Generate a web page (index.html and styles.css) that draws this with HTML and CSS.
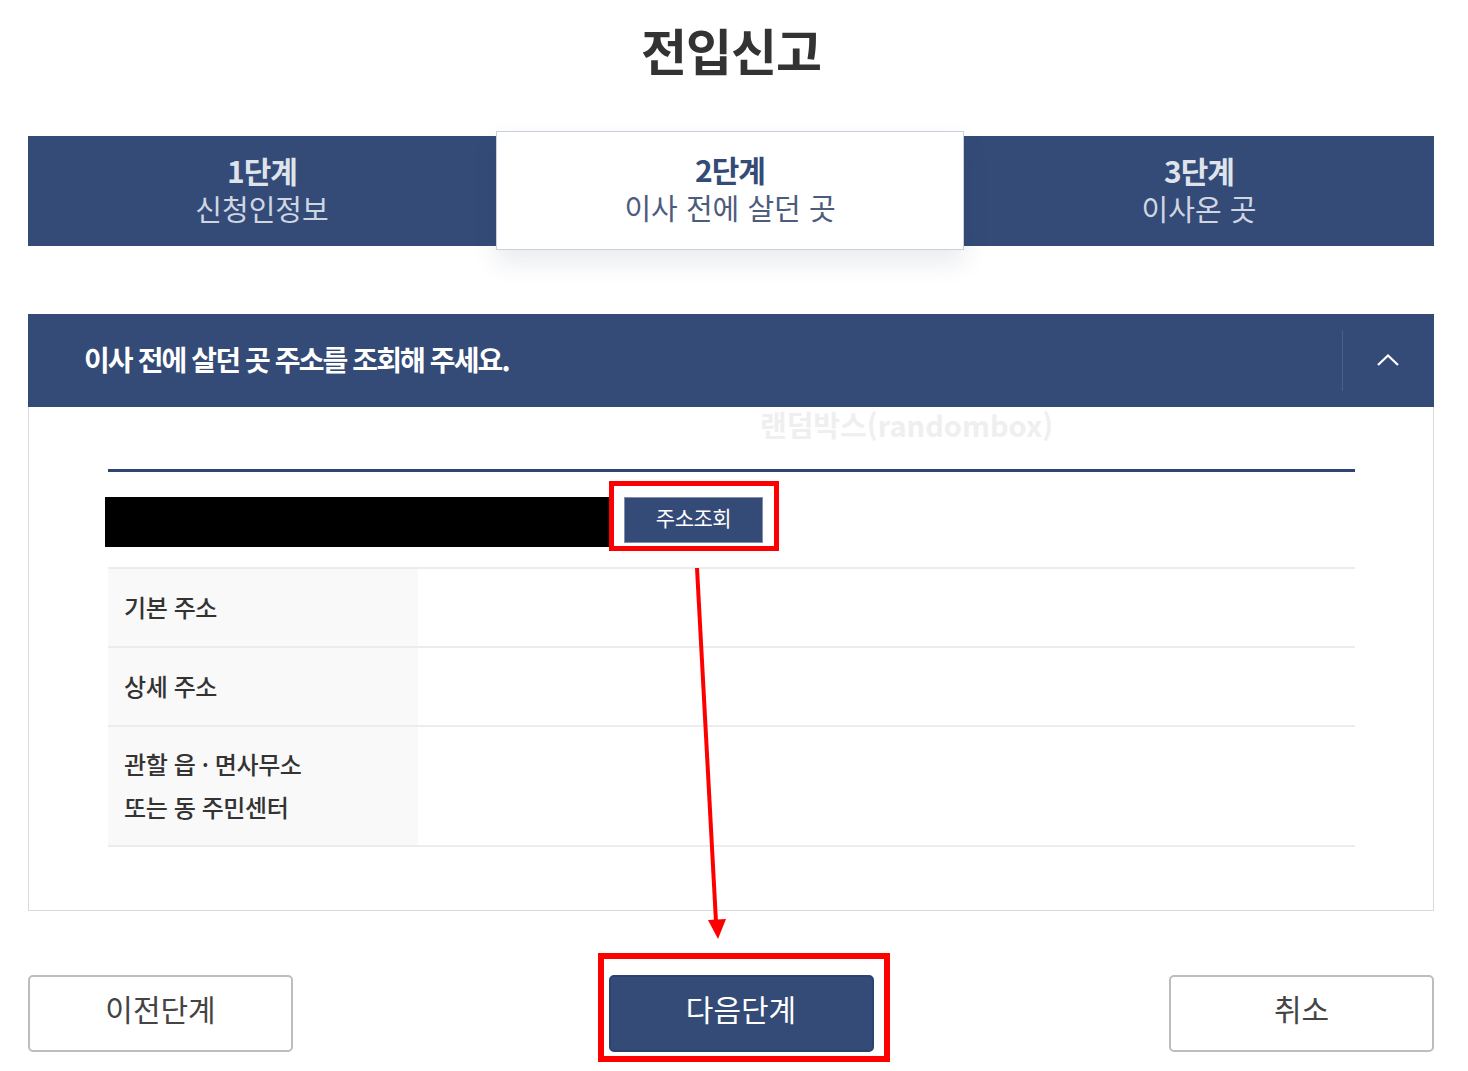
FILE: index.html
```html
<!DOCTYPE html>
<html lang="ko">
<head>
<meta charset="utf-8">
<title>전입신고</title>
<link rel="stylesheet" href="styles.css">
</head>
<body>
<div class="page">
  <h1 class="title">전입신고</h1>

  <ol class="steps">
    <li class="step"><strong>1단계</strong><span>신청인정보</span></li>
    <li class="step step-active"><strong>2단계</strong><span>이사 전에 살던 곳</span></li>
    <li class="step"><strong>3단계</strong><span>이사온 곳</span></li>
  </ol>

  <section class="panel">
    <header class="panel-head">
      <h2 class="panel-title">이사 전에 살던 곳 주소를 조회해 주세요.</h2>
      <button class="toggle" aria-label="접기">
        <svg width="24" height="14" viewBox="0 0 24 14"><path d="M2 12 L12 2.5 L22 12" fill="none" stroke="#fff" stroke-width="2.2"/></svg>
      </button>
    </header>
    <div class="panel-body">
      <div class="watermark">랜덤박스(randombox)</div>
      <div class="search-row">
        <div class="redacted"></div>
        <button class="btn-search">주소조회</button>
      </div>
      <table class="addr">
        <tr><th>기본 주소</th><td></td></tr>
        <tr><th>상세 주소</th><td></td></tr>
        <tr class="tall"><th>관할 읍 · 면사무소<br>또는 동 주민센터</th><td></td></tr>
      </table>
    </div>
  </section>

  <div class="actions">
    <button class="btn btn-line">이전단계</button>
    <button class="btn btn-primary">다음단계</button>
    <button class="btn btn-line">취소</button>
  </div>
</div>

<div class="mark mark-search"></div>
<div class="mark mark-next"></div>
<svg class="arrow" width="1468" height="1071" viewBox="0 0 1468 1071">
  <line x1="697" y1="568" x2="716" y2="922" stroke="#ff0000" stroke-width="4"/>
  <polygon points="708,920 726,919 718,939" fill="#ff0000"/>
</svg>
</body>
</html>
```

FILE: styles.css
```css
html, body {
  margin: 0;
  padding: 0;
  background: #fff;
}
body {
  position: relative;
  width: 1468px;
  height: 1071px;
  overflow: hidden;
  font-family: "Noto Sans CJK KR", "Noto Sans", sans-serif;
  color: #333;
}
.page {
  padding: 0 34px 0 28px;
}
.title {
  margin: 0;
  padding-top: 15px;
  height: 114px;
  box-sizing: border-box;
  text-align: center;
  font-size: 50px;
  line-height: 68px;
  font-weight: 700;
  color: #333;
  letter-spacing: -1px;
}
.steps {
  list-style: none;
  margin: 22px 0 0;
  padding: 0;
  display: grid;
  grid-template-columns: 468px 468px 470px;
  background: #344b78;
  height: 110px;
}
.step {
  display: flex;
  flex-direction: column;
  align-items: center;
  justify-content: center;
  gap: 3px;
  color: #dfe4ec;
  padding-bottom: 4px;
}
.step strong {
  font-size: 30px;
  line-height: 34px;
  font-weight: 700;
  letter-spacing: -1px;
}
.step span {
  font-size: 29px;
  line-height: 36px;
  color: #cfd6e2;
}
.step-active {
  margin: -5px 0 -4px;
  background: #fff;
  border: 1px solid #c9d0dc;
  box-shadow: 0 12px 24px rgba(30, 45, 80, 0.10);
  position: relative;
  z-index: 1;
  padding-bottom: 5px;
}
.step-active strong { color: #344b78; }
.step-active span { color: #4d5c7c; }

.panel {
  margin-top: 68px;
}
.panel-head {
  display: flex;
  align-items: stretch;
  height: 93px;
  background: #344b78;
}
.panel-title {
  flex: 1;
  margin: 0;
  padding-left: 56px;
  display: flex;
  align-items: center;
  font-size: 28px;
  font-weight: 700;
  color: #fff;
  letter-spacing: -1.9px;
  padding-bottom: 4px;
}
.toggle {
  width: 92px;
  background: none;
  border: 0;
  position: relative;
  display: flex;
  align-items: center;
  justify-content: center;
  padding: 0 0 2px;
}
.toggle::before {
  content: "";
  position: absolute;
  left: 0;
  top: 16px;
  bottom: 16px;
  width: 1px;
  background: #4a5f88;
}
.panel-body {
  position: relative;
  border: 1px solid #dadada;
  border-top: 0;
  padding: 62px 78px 63px 79px;
}
.watermark {
  position: absolute;
  left: 731px;
  top: -3px;
  font-size: 29px;
  font-weight: 700;
  color: #efefef;
  letter-spacing: 0;
  line-height: 40px;
}
.search-row {
  border-top: 3px solid #2e4574;
  display: flex;
  align-items: flex-start;
  padding: 25px 0 20px;
  margin-left: 0;
}
.redacted {
  width: 505px;
  height: 50px;
  background: #000;
  margin-left: -3px;
}
.btn-search {
  margin-left: 14px;
  width: 139px;
  height: 46px;
  background: #344b78;
  border: 1px solid #7f8fad;
  color: #fff;
  font-family: "Noto Sans CJK KR", sans-serif;
  font-size: 21px;
  letter-spacing: -0.5px;
  padding: 0 0 6px;
  line-height: 1;
}
.addr {
  width: 100%;
  border-collapse: collapse;
}
.addr tr {
  border-top: 2px solid #ececec;
  border-bottom: 2px solid #ececec;
  height: 79px;
}
.addr tr.tall { height: 120px; }
.addr th {
  width: 310px;
  box-sizing: border-box;
  background: #f9f9f9;
  text-align: left;
  font-weight: 500;
  font-size: 24px;
  line-height: 43px;
  color: #333;
  padding: 0 0 2px 16px;
  letter-spacing: -0.4px;
}
.actions {
  margin-top: 64px;
  display: flex;
  justify-content: space-between;
}
.btn {
  width: 265px;
  height: 77px;
  border-radius: 5px;
  font-family: "Noto Sans CJK KR", sans-serif;
  font-size: 30px;
  padding: 0 0 12px;
  line-height: 1;
}
.btn-line {
  background: #fff;
  border: 2px solid #bdbdbd;
  color: #444;
}
.btn-primary {
  margin-left: 20px;
  background: #344b78;
  border: 2px solid #2c4270;
  color: #fff;
}

.mark {
  position: absolute;
  border: 5px solid #ff0000;
  box-sizing: border-box;
  pointer-events: none;
}
.mark-search {
  left: 609px;
  top: 481px;
  width: 170px;
  height: 70px;
}
.mark-next {
  left: 598px;
  top: 953px;
  width: 292px;
  height: 109px;
  border-width: 6px;
}
.arrow {
  position: absolute;
  left: 0;
  top: 0;
  pointer-events: none;
}
```
